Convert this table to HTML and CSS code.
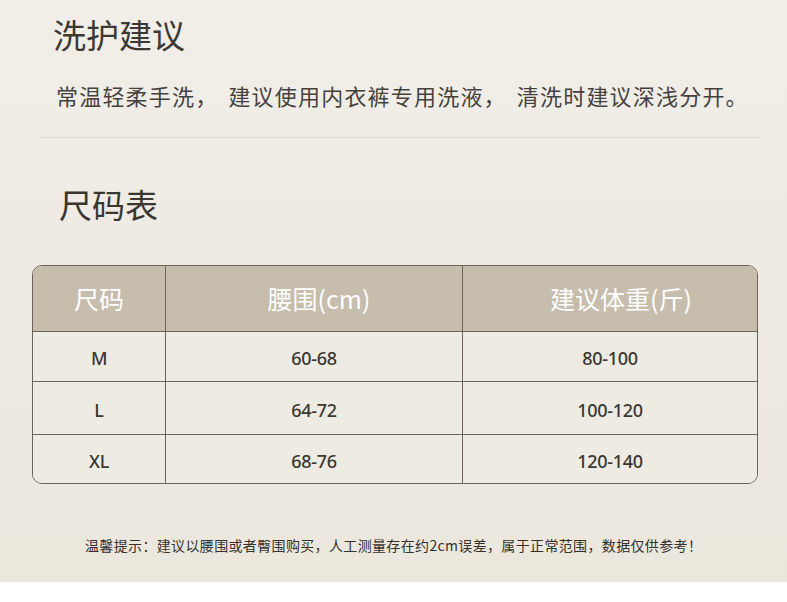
FILE: index.html
```html
<!DOCTYPE html>
<html lang="zh">
<head>
<meta charset="utf-8">
<link rel="stylesheet" href="styles.css">
</head>
<body>
<div class="page">
  <h1 class="title title-care">洗护建议</h1>
  <p class="care-text">常温轻柔手洗<span class="punct">，</span>建议使用内衣裤专用洗液<span class="punct">，</span>清洗时建议深浅分开。</p>
  <div class="divider"></div>
  <h2 class="title title-size">尺码表</h2>
  <div class="size-table">
    <div class="cell head c1">尺码</div>
    <div class="cell head c2">腰围(cm)</div>
    <div class="cell head c3">建议体重(斤)</div>

    <div class="cell r1 c1">M</div>
    <div class="cell r1 c2">60-68</div>
    <div class="cell r1 c3">80-100</div>

    <div class="cell r2 c1">L</div>
    <div class="cell r2 c2">64-72</div>
    <div class="cell r2 c3">100-120</div>

    <div class="cell r3 c1 last">XL</div>
    <div class="cell r3 c2 last">68-76</div>
    <div class="cell r3 c3 last">120-140</div>
  </div>
  <p class="tip">温馨提示：建议以腰围或者臀围购买，人工测量存在约2cm误差，属于正常范围，数据仅供参考！</p>
</div>
</body>
</html>
```

FILE: styles.css
```css
* { box-sizing: border-box; }
html, body { margin: 0; padding: 0; background: #ffffff; }
body {
  width: 787px;
  font-family: "Noto Sans CJK SC", "Noto Sans", sans-serif;
}
.page {
  height: 582px;
  background: linear-gradient(#f1eee8, #ece7dd);
  padding-top: 14px;
  overflow: hidden;
}
.title {
  margin: 0;
  font-weight: 400;
  font-size: 33px;
  line-height: 40px;
  color: #3b3835;
}
.title-care { padding-left: 53px; }
.care-text {
  margin: 26px 0 0 0;
  padding-left: 56px;
  font-size: 22px;
  letter-spacing: 1.2px;
  line-height: 30px;
  color: #45423e;
  white-space: nowrap;
}
.punct { margin-right: 10px; }
.divider {
  margin: 27px 27px 0 39px;
  height: 1px;
  background: #dcd7ce;
}
.title-size {
  margin-top: 46px;
  padding-left: 59px;
  color: #3a3632;
}
.size-table {
  margin: 41px 29px 0 32px;
  display: grid;
  grid-template-columns: 133px 297px 1fr;
  border: 1px solid #6c6458;
  border-radius: 10px;
  overflow: hidden;
}
.cell {
  display: flex;
  align-items: center;
  justify-content: center;
  border-bottom: 1px solid #6c6458;
  border-right: 1px solid #6c6458;
  font-family: "Noto Sans", "Noto Sans CJK SC", sans-serif;
  font-weight: 500;
  font-size: 18px;
  letter-spacing: -0.3px;
  color: #3a3732;
  background: #eeebe3;
  padding-top: 3px;
}
.c3 { border-right: none; }
.last { border-bottom: none; }
.head {
  height: 66px;
  background: #c6bdad;
  color: #ffffff;
  font-family: "Noto Sans CJK SC", "Noto Sans", sans-serif;
  font-weight: 400;
  font-size: 25px;
  letter-spacing: 0;
  padding-top: 0;
  padding-bottom: 2px;
}
.head.c2 { padding-left: 10px; }
.head.c3 { padding-left: 22px; }
.r1 { height: 50px; }
.r2 { height: 53px; }
.r3 { height: 48px; }
.tip {
  margin: 51px 0 0 0;
  padding-left: 85px;
  font-size: 14px;
  letter-spacing: 0.35px;
  line-height: 20px;
  color: #34312d;
  white-space: nowrap;
}
```
